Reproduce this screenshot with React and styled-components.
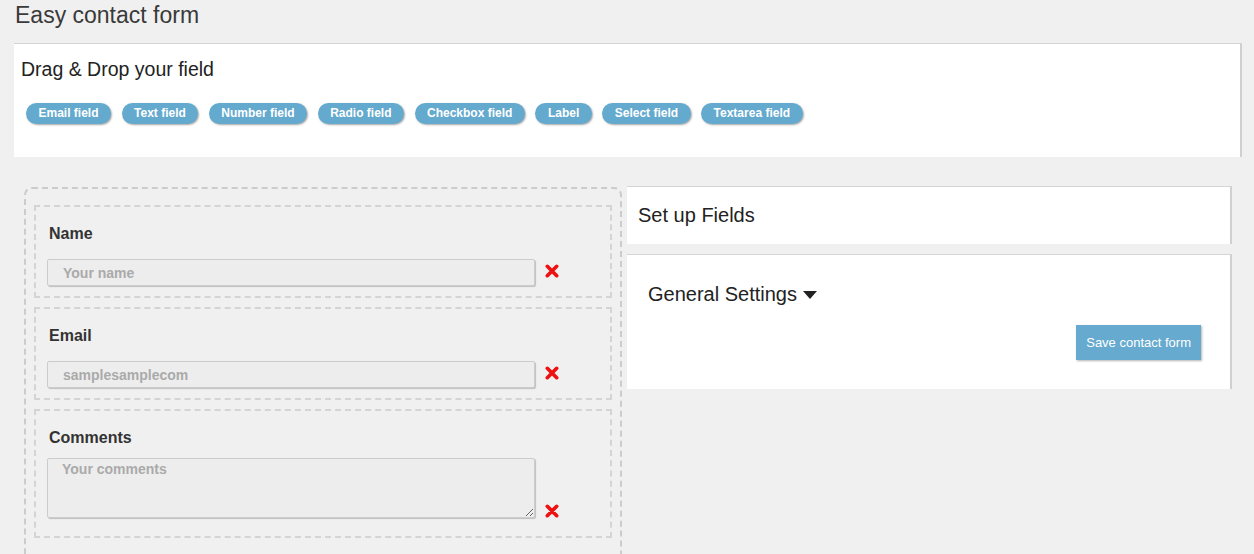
import styled, { createGlobalStyle } from "styled-components";

const GlobalStyle = createGlobalStyle`
    body {
        margin: 0;
        background-color: #f0f0f0;
        font-family: "Liberation Sans", Arial, sans-serif;
    }
`;

const PALETTE = [
    "Email field",
    "Text field",
    "Number field",
    "Radio field",
    "Checkbox field",
    "Label",
    "Select field",
    "Textarea field",
];

function RemoveIcon({ lift }) {
    return (
        <Remove lift={lift} width="14" height="14" viewBox="0 0 14 14">
            <path d="M2.3 2.3 L11.7 11.7 M11.7 2.3 L2.3 11.7" stroke="#ee1111" strokeWidth="3.6" strokeLinecap="round" />
        </Remove>
    );
}

function App() {
    return (
        <Page>
            <GlobalStyle />
            <Title>Easy contact form</Title>
            <Toolbox>
                <ToolboxHeading>Drag &amp; Drop your field</ToolboxHeading>
                <Pills>
                    {PALETTE.map(name => <Pill key={name}>{name}</Pill>)}
                </Pills>
            </Toolbox>

            <Workspace>
                <DropZone>
                    <FieldBox>
                        <FieldLabel>Name</FieldLabel>
                        <ControlRow>
                            <TextInput placeholder="Your name" />
                            <RemoveIcon lift={8} />
                        </ControlRow>
                    </FieldBox>
                    <FieldBox>
                        <FieldLabel>Email</FieldLabel>
                        <ControlRow>
                            <TextInput placeholder="samplesamplecom" />
                            <RemoveIcon lift={8} />
                        </ControlRow>
                    </FieldBox>
                    <FieldBox tall>
                        <FieldLabel tall>Comments</FieldLabel>
                        <ControlRow>
                            <TextArea placeholder="Your comments" />
                            <RemoveIcon lift={0} />
                        </ControlRow>
                    </FieldBox>
                </DropZone>

                <Sidebar>
                    <Panel>
                        <PanelHeading>Set up Fields</PanelHeading>
                    </Panel>
                    <SettingsPanel>
                        <SettingsHeading>
                            General Settings
                            <Caret />
                        </SettingsHeading>
                        <SaveButton>Save contact form</SaveButton>
                    </SettingsPanel>
                </Sidebar>
            </Workspace>
        </Page>
    );
}

export default App;

const Page = styled.div`
    padding: 0 12px 0 14px;
    color: #222222;
`;

const Title = styled.h1`
    margin: 0 0 13px 1px;
    font-size: 23px;
    line-height: 30px;
    font-weight: 400;
    color: #3a3a3a;
`;

const Toolbox = styled.section`
    background-color: #ffffff;
    border-top: 1px solid #d4d4d4;
    border-right: 2px solid #d0d0d0;
    padding: 13px 7px 33px;
`;

const ToolboxHeading = styled.h2`
    margin: 0;
    font-size: 19.5px;
    line-height: 24px;
    font-weight: 400;
    color: #222222;
`;

const Pills = styled.div`
    display: flex;
    flex-wrap: wrap;
    gap: 10.5px;
    margin: 22px 0 0 5px;
`;

const Pill = styled.span`
    display: inline-block;
    height: 21px;
    line-height: 21px;
    padding: 0 12.5px;
    border-radius: 11px;
    background-color: #64a9ce;
    color: #ffffff;
    font-size: 12px;
    font-weight: 700;
    box-shadow: 1px 1px 2px rgba(0, 0, 0, 0.35);
    cursor: move;
`;

const Workspace = styled.div`
    display: flex;
    align-items: flex-start;
    gap: 5px;
    margin-top: 29px;
    padding-left: 10px;
`;

const DropZone = styled.div`
    box-sizing: border-box;
    width: 598px;
    margin-top: 1px;
    padding: 16px 8px 16px;
    border: 2px dashed #cccccc;
    border-bottom: none;
    border-radius: 8px 8px 0 0;
    display: flex;
    flex-direction: column;
    gap: 9px;
`;

const FieldBox = styled.div`
    border: 2px dashed #d4d4d4;
    padding: 17px 11px ${({ tall }) => tall ? "18px" : "10px"};
`;

const FieldLabel = styled.div`
    padding-left: 2px;
    margin-bottom: ${({ tall }) => tall ? "10px" : "15px"};
    font-size: 16px;
    line-height: 20px;
    font-weight: 700;
    color: #333333;
`;

const ControlRow = styled.div`
    display: flex;
    align-items: flex-end;
    gap: 10px;
`;

const TextInput = styled.input`
    box-sizing: border-box;
    width: 488px;
    height: 27px;
    padding: 0 15px;
    border: 1px solid #cccccc;
    border-radius: 2px;
    background-color: #ededed;
    box-shadow: 1px 1px 1px rgba(0, 0, 0, 0.2);
    font-family: "Liberation Sans", Arial, sans-serif;
    font-size: 14px;
    font-weight: 700;
    color: #555555;
    outline: none;
    &::placeholder {
        color: #aaaaaa;
    }
`;

const TextArea = styled.textarea`
    box-sizing: border-box;
    width: 488px;
    height: 60px;
    padding: 1px 14px;
    border: 1px solid #cccccc;
    border-radius: 2px;
    background-color: #ededed;
    box-shadow: 1px 1px 1px rgba(0, 0, 0, 0.2);
    font-family: "Liberation Sans", Arial, sans-serif;
    font-size: 14px;
    line-height: 18px;
    font-weight: 700;
    color: #555555;
    outline: none;
    &::placeholder {
        color: #aaaaaa;
    }
`;

const Remove = styled.svg`
    flex-shrink: 0;
    margin-bottom: ${({ lift }) => lift}px;
    cursor: pointer;
`;

const Sidebar = styled.div`
    width: 605px;
    display: flex;
    flex-direction: column;
    gap: 10px;
`;

const Panel = styled.div`
    box-sizing: border-box;
    background-color: #ffffff;
    border-top: 1px solid #d4d4d4;
    border-right: 2px solid #d0d0d0;
    height: 58px;
    padding: 16px 11px 0;
`;

const PanelHeading = styled.h3`
    margin: 0;
    font-size: 20px;
    line-height: 24px;
    font-weight: 400;
    color: #222222;
`;

const SettingsPanel = styled.div`
    box-sizing: border-box;
    background-color: #ffffff;
    border-top: 1px solid #d4d4d4;
    border-right: 2px solid #d0d0d0;
    height: 135px;
    padding: 27px 29px 0 21px;
    display: flex;
    flex-direction: column;
`;

const SettingsHeading = styled.h3`
    display: flex;
    align-items: center;
    gap: 6px;
    margin: 0;
    font-size: 20px;
    line-height: 24px;
    font-weight: 400;
    color: #222222;
`;

const Caret = styled.span`
    width: 0;
    height: 0;
    margin-top: 2px;
    border-left: 7px solid transparent;
    border-right: 7px solid transparent;
    border-top: 8px solid #222222;
`;

const SaveButton = styled.button`
    align-self: flex-end;
    margin-top: 19px;
    height: 35px;
    padding: 0 10px;
    border: none;
    background-color: #66aacf;
    box-shadow: 1px 1px 2px rgba(0, 0, 0, 0.3);
    color: #ffffff;
    font-family: "Liberation Sans", Arial, sans-serif;
    font-size: 13px;
    cursor: pointer;
`;
